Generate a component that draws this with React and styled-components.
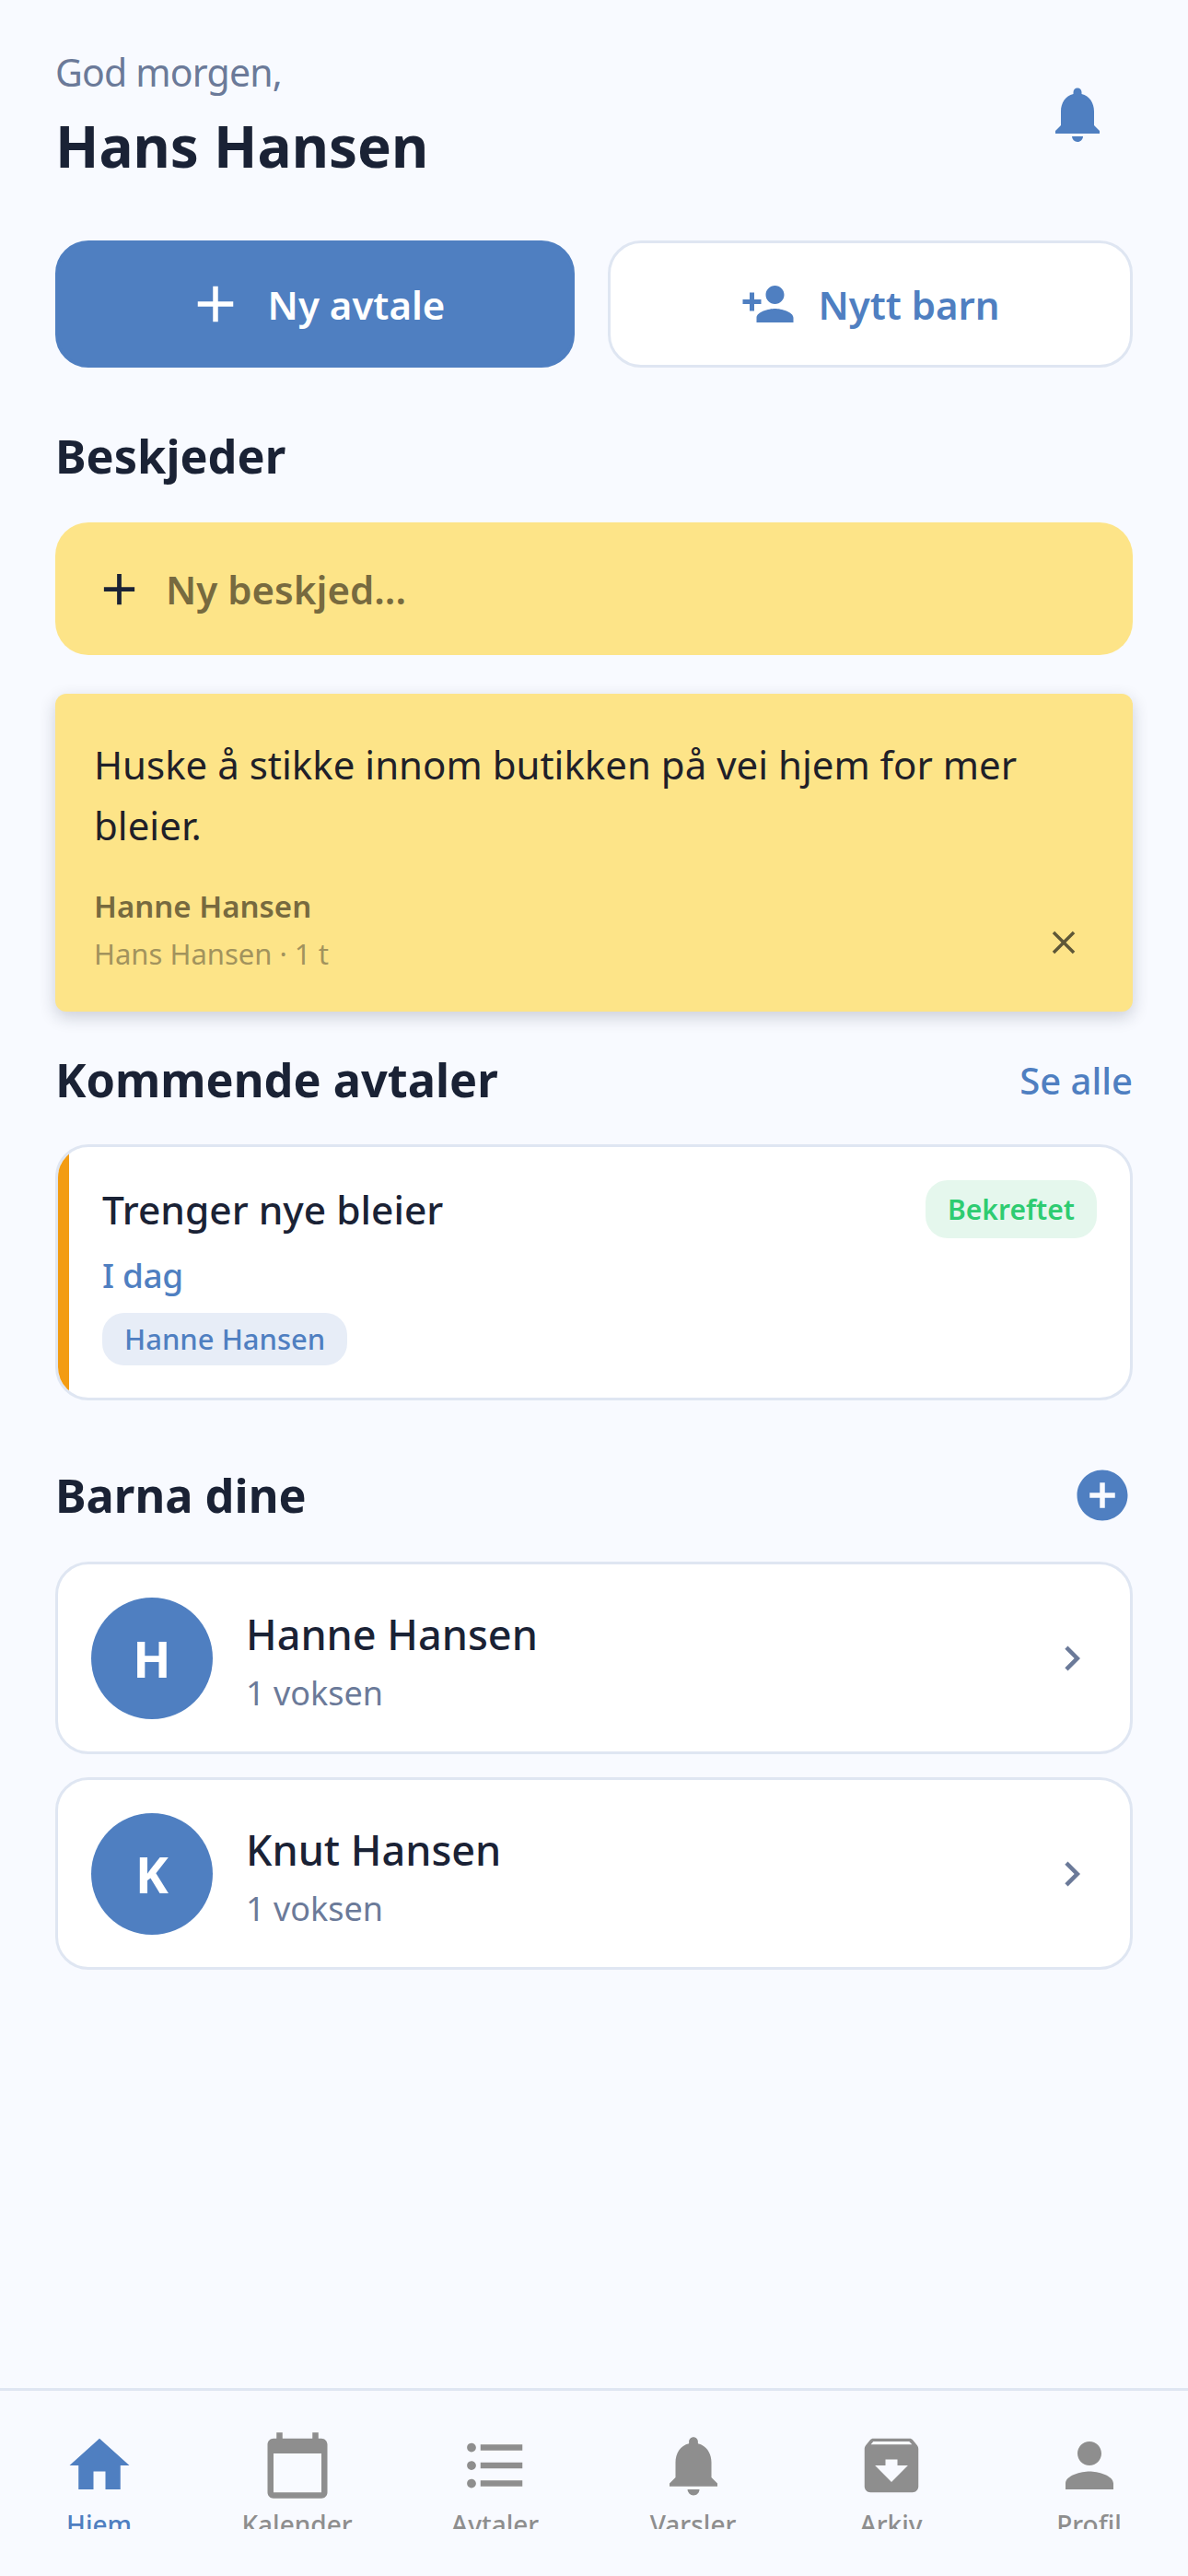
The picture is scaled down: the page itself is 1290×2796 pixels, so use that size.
import React from 'react'
import styled, { createGlobalStyle } from 'styled-components'
import {
    MdAdd,
    MdAddCircle,
    MdArchive,
    MdCalendarToday,
    MdChevronRight,
    MdClose,
    MdFormatListBulleted,
    MdHome,
    MdNotifications,
    MdPerson,
    MdPersonAdd,
} from 'react-icons/md'

const BLUE = '#4f7fc1';
const INK = '#1a2235';
const SLATE = '#6b7a99';
const LINE = '#dfe6f2';
const YELLOW = '#fde488';
const PAGE = '#f8faff';

const GlobalStyle = createGlobalStyle`
    html, body { margin: 0; padding: 0; background: ${PAGE}; }
    * { box-sizing: border-box; }
    body { font-family: "Noto Sans", "Open Sans", sans-serif; color: ${INK}; }
`;

const Screen = styled.div`
    min-height: 2796px;
    display: flex;
    flex-direction: column;
`;

const Main = styled.main`
    flex: 1;
    padding: 48px 60px 0;
`;

const Header = styled.header`
    display: flex;
    justify-content: space-between;
    align-items: center;
    height: 152px;
    margin-bottom: 61px;
`;

const Greeting = styled.div`
    font-size: 41px;
    letter-spacing: -0.8px;
    line-height: 60px;
    color: ${SLATE};
`;

const UserName = styled.h1`
    margin: 8px 0 0;
    font-size: 62px;
    line-height: 84px;
    font-weight: 700;
`;

const BellButton = styled.div`
    display: flex;
    color: ${BLUE};
    margin-right: 24px;
`;

const Actions = styled.div`
    display: flex;
    gap: 36px;
    margin-bottom: 60px;
`;

const ActionButton = styled.button`
    flex: ${({ $primary }) => ($primary ? '564 1 0' : '570 1 0')};
    height: 138px;
    display: flex;
    align-items: center;
    justify-content: center;
    gap: 24px;
    border-radius: 36px;
    border: 3px solid ${({ $primary }) => ($primary ? BLUE : LINE)};
    background: ${({ $primary }) => ($primary ? BLUE : '#fff')};
    color: ${({ $primary }) => ($primary ? '#fff' : BLUE)};
    font: 600 42px "Noto Sans", sans-serif;
    padding: 0;
`;

const SectionHead = styled.div`
    display: flex;
    justify-content: space-between;
    align-items: center;
    height: 72px;
    margin-bottom: ${({ $gap }) => $gap || 36}px;
`;

const SectionTitle = styled.h2`
    margin: 0;
    font-size: 50.5px;
    line-height: 72px;
    font-weight: 700;
`;

const SeeAll = styled.span`
    font-size: 40px;
    font-weight: 500;
    color: ${BLUE};
`;

const AddChild = styled.div`
    display: flex;
    color: ${BLUE};
`;

const NewMessage = styled.div`
    height: 144px;
    border-radius: 36px;
    background: ${YELLOW};
    display: flex;
    align-items: center;
    gap: 22px;
    padding: 0 41px;
    margin-bottom: 42px;
    color: ${INK};
    font-size: 42px;
    font-weight: 600;
`;

const Placeholder = styled.span`
    color: #776a3f;
`;

const Note = styled.article`
    position: relative;
    background: ${YELLOW};
    border-radius: 12px;
    box-shadow: 0 6px 18px rgba(26, 34, 53, 0.2);
    padding: 44px 42px 36px;
    height: 345px;
    margin-bottom: 38px;
`;

const NoteText = styled.p`
    margin: 0 0 29px;
    font-size: 42px;
    line-height: 66px;
    color: #1f2028;
`;

const NoteAuthor = styled.div`
    font-size: 33px;
    line-height: 51px;
    font-weight: 600;
    color: #776a3f;
`;

const NoteMeta = styled.div`
    margin-top: 4px;
    font-size: 31px;
    line-height: 45px;
    color: #a2935d;
`;

const CloseButton = styled.div`
    position: absolute;
    right: 54px;
    bottom: 54px;
    display: flex;
    color: #5e5737;
`;

const AppointmentCard = styled.article`
    height: 278px;
    margin-bottom: 67px;
    display: flex;
    background: #fff;
    border: 3px solid ${LINE};
    border-radius: 36px;
    overflow: hidden;
`;

const Stripe = styled.div`
    width: 12px;
    flex: none;
    background: #f39c12;
`;

const AppointmentBody = styled.div`
    flex: 1;
    padding: 36px 36px 0;
`;

const AppointmentTop = styled.div`
    display: flex;
    justify-content: space-between;
    align-items: center;
`;

const AppointmentTitle = styled.div`
    font-size: 42.5px;
    font-weight: 500;
`;

const StatusBadge = styled.span`
    background: #e5f7ed;
    color: #2ecc71;
    border-radius: 24px;
    font-size: 30px;
    font-weight: 600;
    line-height: 63px;
    padding: 0 24px;
`;

const AppointmentDate = styled.div`
    margin-top: 10px;
    font-size: 37px;
    letter-spacing: -0.4px;
    line-height: 60px;
    font-weight: 500;
    color: ${BLUE};
`;

const ChildChip = styled.div`
    width: fit-content;
    margin-top: 11px;
    background: #e7edf7;
    color: ${BLUE};
    border-radius: 24px;
    font-size: 31px;
    font-weight: 500;
    line-height: 57px;
    padding: 0 24px;
`;

const ChildList = styled.div`
    display: flex;
    flex-direction: column;
    gap: 25px;
`;

const ChildCard = styled.article`
    height: 209px;
    display: flex;
    align-items: center;
    gap: 36px;
    padding: 0 36px;
    background: #fff;
    border: 3px solid ${LINE};
    border-radius: 36px;
`;

const Avatar = styled.div`
    width: 132px;
    height: 132px;
    border-radius: 50%;
    flex: none;
    background: ${BLUE};
    color: #fff;
    display: flex;
    align-items: center;
    justify-content: center;
    font-size: 54px;
    font-weight: 700;
`;

const ChildInfo = styled.div`
    flex: 1;
    padding-top: 6px;
`;

const ChildName = styled.div`
    font-size: 45px;
    line-height: 66px;
    font-weight: 500;
`;

const ChildMeta = styled.div`
    margin-top: 4px;
    font-size: 36px;
    line-height: 54px;
    color: ${SLATE};
`;

const Chevron = styled.div`
    display: flex;
    color: ${SLATE};
`;

const TabBar = styled.nav`
    height: 204px;
    border-top: 3px solid ${LINE};
    padding-top: 42px;
    display: grid;
    grid-template-columns: repeat(6, 1fr);
    align-items: start;
`;

const Tab = styled.div`
    height: 108px;
    overflow: hidden;
    display: flex;
    flex-direction: column;
    align-items: center;
    color: ${({ $active }) => ($active ? BLUE : '#8e8e8e')};

    svg {
        flex: none;
    }
`;

const TabLabel = styled.span`
    margin-top: 3px;
    font-size: 28px;
    line-height: 45px;
    font-weight: 500;
`;

const TABS = [
    { label: 'Hjem', Icon: MdHome, active: true },
    { label: 'Kalender', Icon: MdCalendarToday },
    { label: 'Avtaler', Icon: MdFormatListBulleted },
    { label: 'Varsler', Icon: MdNotifications },
    { label: 'Arkiv', Icon: MdArchive },
    { label: 'Profil', Icon: MdPerson },
];

const CHILDREN = [
    { name: 'Hanne Hansen', initial: 'H' },
    { name: 'Knut Hansen', initial: 'K' },
];

const App = () => (
    <Screen>
        <GlobalStyle/>
        <Main>
            <Header>
                <div>
                    <Greeting>God morgen,</Greeting>
                    <UserName>Hans Hansen</UserName>
                </div>
                <BellButton><MdNotifications size={ 72 }/></BellButton>
            </Header>

            <Actions>
                <ActionButton $primary>
                    <MdAdd size={ 66 }/>
                    Ny avtale
                </ActionButton>
                <ActionButton>
                    <MdPersonAdd size={ 60 }/>
                    Nytt barn
                </ActionButton>
            </Actions>

            <SectionHead>
                <SectionTitle>Beskjeder</SectionTitle>
            </SectionHead>
            <NewMessage>
                <MdAdd size={ 57 }/>
                <Placeholder>Ny beskjed...</Placeholder>
            </NewMessage>
            <Note>
                <NoteText>Huske å stikke innom butikken på vei hjem for mer bleier.</NoteText>
                <NoteAuthor>Hanne Hansen</NoteAuthor>
                <NoteMeta>Hans Hansen · 1 t</NoteMeta>
                <CloseButton><MdClose size={ 42 }/></CloseButton>
            </Note>

            <SectionHead $gap={ 34 }>
                <SectionTitle>Kommende avtaler</SectionTitle>
                <SeeAll>Se alle</SeeAll>
            </SectionHead>
            <AppointmentCard>
                <Stripe/>
                <AppointmentBody>
                    <AppointmentTop>
                        <AppointmentTitle>Trenger nye bleier</AppointmentTitle>
                        <StatusBadge>Bekreftet</StatusBadge>
                    </AppointmentTop>
                    <AppointmentDate>I dag</AppointmentDate>
                    <ChildChip>Hanne Hansen</ChildChip>
                </AppointmentBody>
            </AppointmentCard>

            <SectionHead>
                <SectionTitle>Barna dine</SectionTitle>
                <AddChild><MdAddCircle size={ 66 }/></AddChild>
            </SectionHead>
            <ChildList>
                { CHILDREN.map(child => (
                    <ChildCard key={ child.name }>
                        <Avatar>{ child.initial }</Avatar>
                        <ChildInfo>
                            <ChildName>{ child.name }</ChildName>
                            <ChildMeta>1 voksen</ChildMeta>
                        </ChildInfo>
                        <Chevron><MdChevronRight size={ 54 }/></Chevron>
                    </ChildCard>
                )) }
            </ChildList>
        </Main>

        <TabBar>
            { TABS.map(({ label, Icon, active }) => (
                <Tab key={ label } $active={ active }>
                    <Icon size={ 78 }/>
                    <TabLabel>{ label }</TabLabel>
                </Tab>
            )) }
        </TabBar>
    </Screen>
);

export default App;
